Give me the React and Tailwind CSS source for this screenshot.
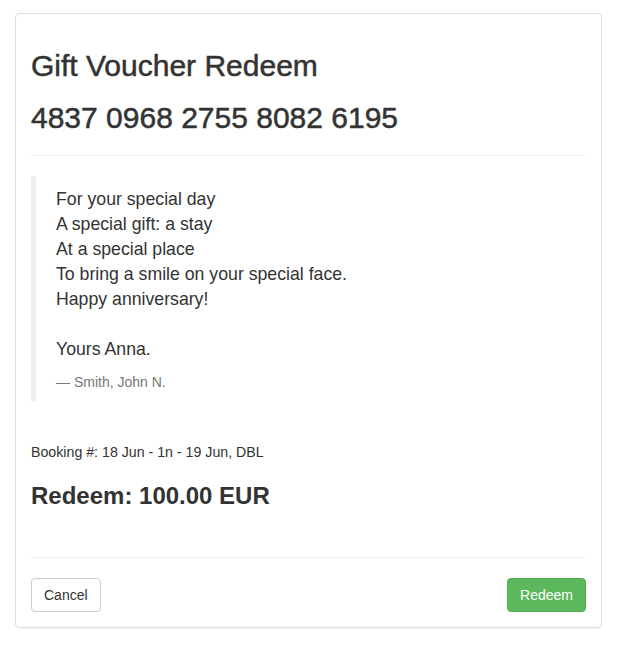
export default function App() {
  return (
    <div className="min-h-[649px] bg-white px-[15px] pt-[13px] font-['Liberation_Sans',Arial,sans-serif] text-[#333]">
      <div className="w-[587px] rounded-[4px] border border-[#ddd] px-[15px] py-[15px] shadow-[0_1px_1px_rgba(0,0,0,0.05)]">
        <h2 className="mt-[20px] text-[30px] leading-[33px] font-medium [-webkit-text-stroke:0.5px_#333]">
          Gift Voucher Redeem
        </h2>
        <h2 className="mt-[19px] text-[30px] leading-[33px] font-medium [-webkit-text-stroke:0.5px_#333]">
          4837 0968 2755 8082 6195
        </h2>
        <hr className="mt-[21px] mb-[20px] border-t border-[#eee]" />

        <blockquote className="border-l-[5px] border-[#eee] px-[20px] pt-[11px] pb-[9px] text-[17.7px] leading-[25px]">
          <p className="mb-[10px]">
            For your special day
            <br />
            A special gift: a stay
            <br />
            At a special place
            <br />
            To bring a smile on your special face.
            <br />
            Happy anniversary!
            <br />
            <br />
            Yours Anna.
          </p>
          <footer className="text-[14px] leading-[20px] text-[#777]">— Smith, John N.</footer>
        </blockquote>

        <p className="mt-[41px] text-[14.2px] leading-[20px]">Booking #: 18 Jun - 1n - 19 Jun, DBL</p>
        <h4 className="mt-[21px] text-[24px] leading-[26px] font-bold">Redeem: 100.00 EUR</h4>

        <hr className="mt-[48px] mb-[20px] border-t border-[#eee]" />

        <div className="flex items-center justify-between">
          <button
            type="button"
            className="h-[34px] rounded-[4px] border border-[#ccc] bg-white px-[12px] text-[14px] text-[#333]"
          >
            Cancel
          </button>
          <button
            type="button"
            className="h-[34px] rounded-[4px] border border-[#4cae4c] bg-[#5cb85c] px-[12px] text-[14px] text-white"
          >
            Redeem
          </button>
        </div>
      </div>
    </div>
  );
}
